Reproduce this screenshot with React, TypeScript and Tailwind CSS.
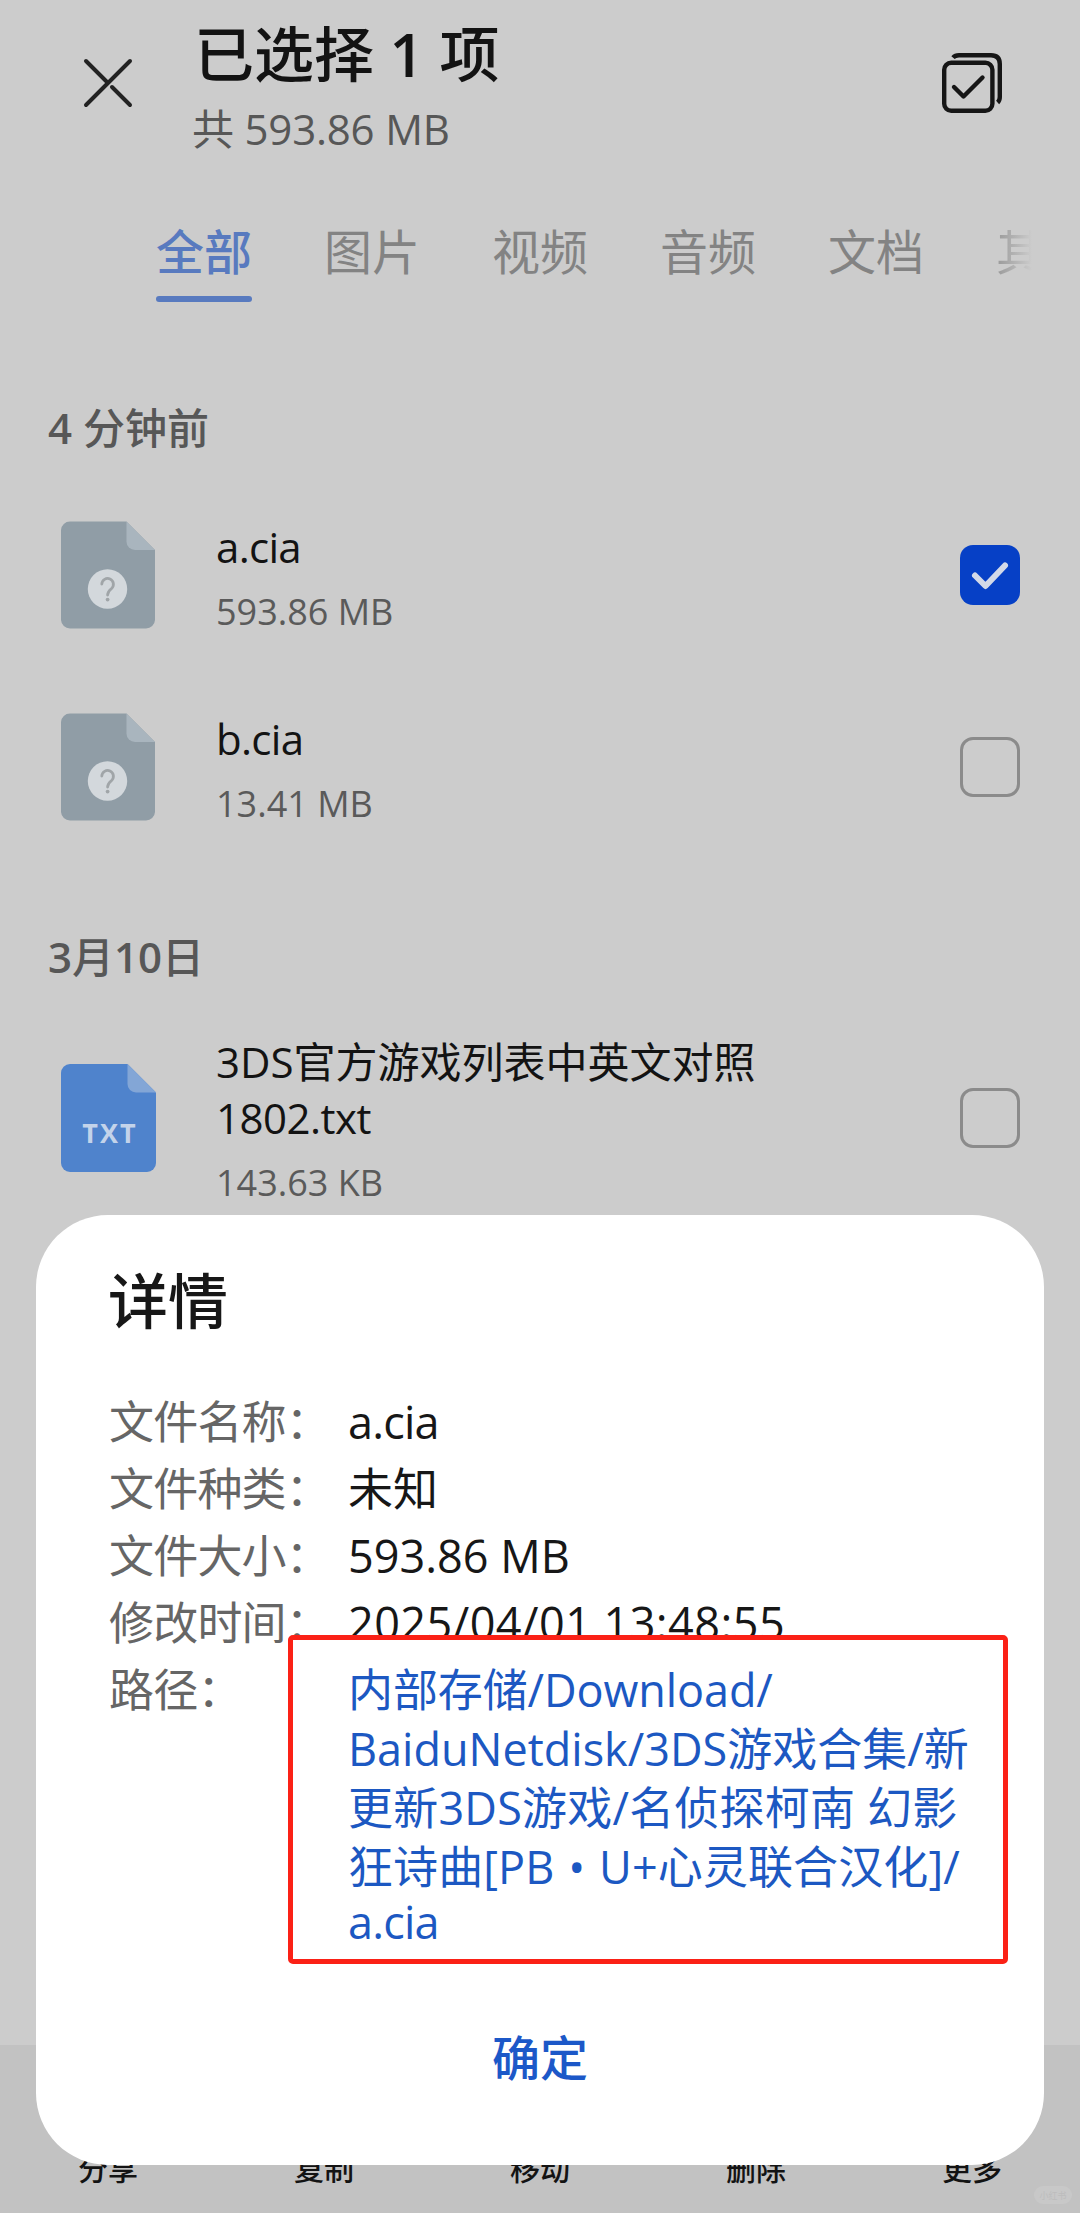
import React from "react";

const tabs = ["图片", "视频", "音频", "文档"];
const actions = ["分享", "复制", "移动", "删除", "更多"];

const details = [
  { label: "文件名称：", value: <span className="tracking-[-0.8px]">a.cia</span> },
  { label: "文件种类：", value: "未知" },
  { label: "文件大小：", value: "593.86 MB" },
  { label: "修改时间：", value: <span className="tracking-[0.45px]">2025/04/01 13:48:55</span> },
];

function CloseIcon() {
  return (
    <svg className="h-[52px] w-[52px]" viewBox="0 0 52 52" fill="none" stroke="#222" strokeWidth="4" strokeLinecap="round">
      <path d="M48 4 4 48M4 4l20.500 20.500M30 30l18 18" />
    </svg>
  );
}

function SelectAllIcon() {
  return (
    <svg className="h-[60px] w-[60px]" viewBox="0 0 60 60" fill="none" stroke="#161616" strokeWidth="4.400">
      <rect x="2.200" y="9.800" width="48.200" height="48" rx="7" />
      <path d="M11 4.600Q13 2.300 17 2.300H49Q57.800 2.300 57.800 11V44Q57.800 47.500 55.600 49.500" />
      <path d="M12 34l9.500 9.500L40.500 24.500" strokeLinecap="round" strokeLinejoin="round" />
    </svg>
  );
}

function UnknownFileIcon() {
  return (
    <svg className="h-[108px] w-[95px]" viewBox="0 0 95 108">
      <path d="M9 .5H65.500L94 29V99a9 9 0 0 1-9 8.500H9A9 9 0 0 1 0 99V9A9 9 0 0 1 9 .5Z" fill="#909da6" />
      <path d="M65.500 .5 94 29H74a8.500 8.500 0 0 1-8.500-8.500Z" fill="#a9b5be" />
      <circle cx="46.500" cy="68" r="19.700" fill="#d3d8dc" />
      <path d="M40.800 63a5.800 5.800 0 1 1 9.800 4.500c-2.500 2-4 3.300-4 6.500" fill="none" stroke="#a0a5a8" strokeWidth="2.800" strokeLinecap="round" />
      <circle cx="46.600" cy="78.600" r="1.900" fill="#a0a5a8" />
    </svg>
  );
}

function TxtFileIcon() {
  return (
    <svg className="h-[108px] w-[95px]" viewBox="0 0 95 108">
      <path d="M9 0H66.500L95 28.500V99a9 9 0 0 1-9 9H9A9 9 0 0 1 0 99V9A9 9 0 0 1 9 0Z" fill="#4f83cc" />
      <path d="M66.500 0 95 28.500H75a8.500 8.500 0 0 1-8.500-8.500Z" fill="#83a6d6" />
      <text x="49" y="79" textAnchor="middle" fontSize="27" fontWeight="700" letterSpacing="2" fill="#c3d3ea" fontFamily="'Open Sans', sans-serif">
        TXT
      </text>
    </svg>
  );
}

function Checkbox({ checked }: { checked?: boolean }) {
  if (checked) {
    return (
      <span className="flex h-[60px] w-[60px] shrink-0 items-center justify-center rounded-[13px] bg-[#0640c6]">
        <svg className="h-[60px] w-[60px]" viewBox="0 0 60 60" fill="none" stroke="#d2d9e8" strokeWidth="6" strokeLinecap="round" strokeLinejoin="round">
          <path d="M15 30.500 25.500 41 45 20.500" />
        </svg>
      </span>
    );
  }
  return <span className="h-[60px] w-[60px] shrink-0 rounded-[13px] border-[3px] border-[#8b8b8b]" />;
}

function SectionTitle({ children }: { children: React.ReactNode }) {
  return <h2 className="h-[102px] pl-12 text-[42px] leading-[102px] font-medium text-[#575757]">{children}</h2>;
}

function Digits({ children }: { children: React.ReactNode }) {
  return <span className="font-semibold">{children}</span>;
}

function FileRow({ icon, name, size, checked }: { icon: React.ReactNode; name: React.ReactNode; size: string; checked?: boolean }) {
  return (
    <div className="flex items-center pr-15 pl-[61px]">
      {icon}
      <div className="ml-[60px] flex-1 pt-1.5">
        <div className="text-[42px] leading-14 text-[#131313]">{name}</div>
        <div className="mt-3 text-[36px] leading-[50px] text-[#5a5a5a]">{size}</div>
      </div>
      <Checkbox checked={checked} />
    </div>
  );
}

export default function App() {
  return (
    <div className="relative flex h-[2213px] w-[1080px] flex-col overflow-hidden bg-[#cccccc] font-['Open_Sans','Noto_Sans_CJK_SC',sans-serif]">
      <header className="flex h-[222px] items-start pt-3 pr-[78px] pl-[82px]">
        <div className="mt-[45px]">
          <CloseIcon />
        </div>
        <div className="ml-[60px] flex-1">
          <h1 className="text-[60px] leading-[84px] font-medium text-[#131313]">
            已选择 <Digits>1</Digits> 项
          </h1>
          <p className="-ml-[2px] text-[42px] leading-[65px] tracking-[-0.2px] text-[#575757]">共 593.86 MB</p>
        </div>
        <div className="mt-[41px]">
          <SelectAllIcon />
        </div>
      </header>

      <nav className="mr-12 ml-39 flex h-20 gap-18 text-[48px] leading-[60px] whitespace-nowrap text-[#838383]">
        <div className="shrink-0 font-medium text-[#587abf]">
          全部
          <div className="mt-[14px] h-[6px] rounded-full bg-[#587abf]" />
        </div>
        {tabs.map((tab) => (
          <div key={tab} className="shrink-0">
            {tab}
          </div>
        ))}
        <div className="w-9 shrink-0 overflow-hidden bg-gradient-to-r from-[#999] to-[#ccc] bg-clip-text text-transparent">其他</div>
      </nav>

      <main className="mt-[75px] flex-1">
        <SectionTitle>
          <Digits>4</Digits> 分钟前
        </SectionTitle>
        <div className="grid auto-rows-[192px]">
          <FileRow icon={<UnknownFileIcon />} name={<span className="tracking-[-0.7px]">a.cia</span>} size="593.86 MB" checked />
          <FileRow icon={<UnknownFileIcon />} name={<span className="tracking-[-0.7px]">b.cia</span>} size="13.41 MB" />
        </div>
        <div className="mt-[43px]">
          <SectionTitle>
            <Digits>3</Digits>月<Digits>10</Digits>日
          </SectionTitle>
          <div className="grid auto-rows-[220px]">
            <FileRow
              icon={<TxtFileIcon />}
              name={
                <>
                  3DS官方游戏列表中英文对照
                  <br />
                  <span className="tracking-[-0.5px]">1802.txt</span>
                </>
              }
              size="143.63 KB"
            />
          </div>
        </div>
      </main>

      <footer className="flex h-[168px] shrink-0 items-start bg-[#c2c2c2] pt-[102px]">
        {actions.map((action) => (
          <div key={action} className="flex-1 text-center text-[30px] leading-[44px] font-medium text-[#131313]">
            {action}
          </div>
        ))}
      </footer>
      <span className="absolute right-2 bottom-[9px] flex h-[18px] w-[38px] items-center justify-center rounded-full bg-[#c8c8c8] text-[9px] leading-none text-[#bdbdbd]">
        小红书
      </span>

      <section className="absolute top-[1215px] left-9 h-[950px] w-[1008px] rounded-[72px] bg-white px-18 text-[45px] text-[#171717]">
        <h2 className="pt-[46px] text-[60px] leading-20 font-medium">详情</h2>
        <dl className="mt-[47px] leading-[67px]">
          {details.map((item) => (
            <div key={item.label} className="flex">
              <dt className="w-60 shrink-0 pl-px tracking-[-0.8px] whitespace-nowrap text-[#666]">{item.label}</dt>
              <dd className="whitespace-nowrap">{item.value}</dd>
            </div>
          ))}
          <div className="flex">
            <dt className="w-60 shrink-0 pl-px tracking-[-0.8px] text-[#666]">路径：</dt>
            <dd className="pt-1 leading-[59px] whitespace-nowrap text-[#1c58c2]">
              <div className="tracking-[-0.1px]">内部存储/Download/</div>
              <div>BaiduNetdisk/3DS游戏合集/新</div>
              <div className="tracking-[0.2px]">更新3DS游戏/名侦探柯南 幻影</div>
              <div className="tracking-[0.1px]">
                狂诗曲[PB<span className="mx-[2px]"> • </span>U+心灵联合汉化]/
              </div>
              <div className="-mt-[4px] tracking-[-0.8px]">a.cia</div>
            </dd>
          </div>
        </dl>
        <button className="mx-auto mt-[75px] block text-[48px] leading-16 font-medium text-[#1c58c8]">确定</button>
        <div className="absolute top-[420px] left-[252px] h-[329px] w-[720px] rounded-[5px] border-[5px] border-[#fb2116]" />
      </section>
    </div>
  );
}
